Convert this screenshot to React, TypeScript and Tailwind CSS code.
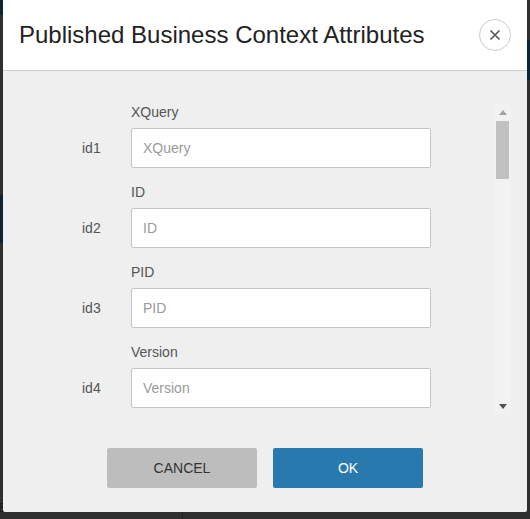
import React from "react";

const fields = [
  { id: "id1", label: "XQuery" },
  { id: "id2", label: "ID" },
  { id: "id3", label: "PID" },
  { id: "id4", label: "Version" },
];

function CloseIcon() {
  return (
    <svg width="12" height="12" viewBox="0 0 12 12" fill="none">
      <path d="M1.5 1.5 L10.5 10.5 M10.5 1.5 L1.5 10.5" stroke="#5a5a5a" strokeWidth="1.7" strokeLinecap="butt" />
    </svg>
  );
}

function Scrollbar() {
  return (
    <div className="w-[17px] bg-[#f2f2f2] flex flex-col shrink-0">
      <div className="h-[17px] flex items-center justify-center">
        <svg width="8" height="5" viewBox="0 0 8 5">
          <path d="M4 0 L8 5 L0 5 Z" fill="#a3a3a3" />
        </svg>
      </div>
      <div className="h-[58px] mx-[2px] bg-[#c1c1c1]" />
      <div className="flex-1" />
      <div className="h-[17px] flex items-center justify-center">
        <svg width="8" height="5" viewBox="0 0 8 5">
          <path d="M0 0 L8 0 L4 5 Z" fill="#505050" />
        </svg>
      </div>
    </div>
  );
}

export default function App() {
  return (
    <div className="relative w-[530px] h-[519px] overflow-hidden bg-[#2f2f2f] font-['Liberation_Sans',Arial,sans-serif]">
      {/* background page */}
      <div className="w-full h-full flex flex-col">
        <div className="flex-1 flex">
          <div className="w-[3px] flex flex-col">
            <div className="h-[15px] bg-[#0c2536]" />
            <div className="h-[180px] bg-[#2f2f2f]" />
            <div className="h-[48px] bg-[#0c2536]" />
            <div className="flex-1 bg-[#2f2f2f]" />
          </div>
          <div className="flex-1" />
          <div className="w-[3px] flex flex-col">
            <div className="h-[40px] bg-[#2f2f2f]" />
            <div className="h-[40px] bg-[#0c2536]" />
            <div className="flex-1 bg-[#2f2f2f]" />
          </div>
        </div>
        <div className="h-[16px] flex">
          <div className="w-[183px] border-r border-[#242424] overflow-hidden">
            <span className="block -ml-[2px] -mt-[3px] text-[13px] leading-[16px] text-[#161616]">Sheets</span>
          </div>
          <div className="flex-1" />
        </div>
      </div>

      {/* modal */}
      <div className="absolute left-[3px] top-0 w-[524px] h-[512px] bg-[#efefef] rounded-b-[2px] flex flex-col">
        <div className="h-[71px] bg-white border-b border-[#cfcfcf] flex items-center justify-between pl-4 pr-4 shrink-0">
          <h1 className="text-[24px] leading-[24px] text-[#222] font-normal">Published Business Context Attributes</h1>
          <button className="w-8 h-8 rounded-full border border-[#cccccc] bg-white flex items-center justify-center">
            <CloseIcon />
          </button>
        </div>

        <div className="flex-1 flex flex-col px-4 pt-[33px] pb-6">
          <div className="h-[311px] flex shrink-0">
            <div className="flex-1 overflow-hidden pl-[63px]">
              {fields.map((f) => (
                <div key={f.id} className="grid grid-cols-[49px_300px] mb-4">
                  <div />
                  <div className="h-4 leading-4 text-[14px] text-[#555] mb-2">{f.label}</div>
                  <div className="flex items-center text-[14px] text-[#555]">{f.id}</div>
                  <input
                    type="text"
                    placeholder={f.label}
                    className="h-10 w-[300px] bg-white border border-[#c4c4c4] rounded-[2px] px-[11px] text-[14px] text-[#333] placeholder:text-[#9a9a9a] outline-none font-['Liberation_Sans',Arial,sans-serif]"
                  />
                </div>
              ))}
            </div>
            <Scrollbar />
          </div>

          <div className="mt-[33px] flex justify-center gap-4">
            <button className="w-[150px] h-10 rounded-[2px] bg-[#bdbdbd] text-[14px] text-[#333]">CANCEL</button>
            <button className="w-[150px] h-10 rounded-[2px] bg-[#2879ad] text-[14px] text-white">OK</button>
          </div>
        </div>
      </div>
    </div>
  );
}
